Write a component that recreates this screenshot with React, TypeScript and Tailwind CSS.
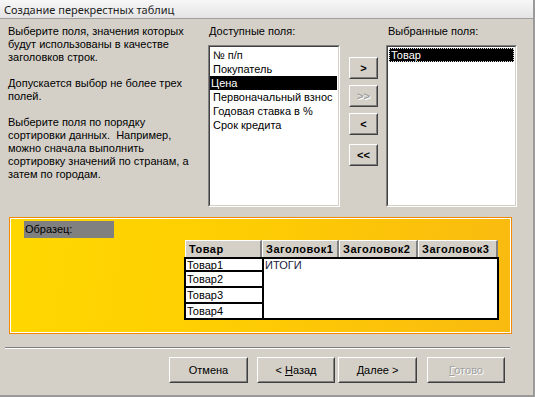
import type { ReactNode } from 'react'

const ui = "font-['Liberation_Sans',Arial,sans-serif] text-[11px] leading-[13px] text-black"

function Sunken({ className, children }: { className: string; children: ReactNode }) {
  return (
    <div className={`border border-t-[#808080] border-l-[#808080] border-r-white border-b-white ${className}`}>
      <div className="h-full border border-t-[#404040] border-l-[#404040] border-r-[#d4d0c8] border-b-[#d4d0c8] bg-white">
        {children}
      </div>
    </div>
  )
}

function Btn({ className, children }: { className: string; children: ReactNode }) {
  return (
    <div className={`border border-t-white border-l-white border-r-[#404040] border-b-[#404040] ${className}`}>
      <div className="h-full flex items-center justify-center border border-t-[#d4d0c8] border-l-[#d4d0c8] border-r-[#808080] border-b-[#808080] bg-[#d4d0c8]">
        {children}
      </div>
    </div>
  )
}

const available = ['№ п/п', 'Покупатель', 'Цена', 'Первоначальный взнос', 'Годовая ставка в %', 'Срок кредита']
const disabled = 'text-[#a0a0a0] [text-shadow:1px_1px_0_#ffffff]'

export default function App() {
  return (
    <div className={`w-[535px] h-[397px] bg-[#d4d0c8] flex flex-col border-r-2 border-b-2 border-[#9a9a9a] overflow-hidden ${ui}`}>
      {/* title */}
      <div className="h-[19px] shrink-0 border-b border-[#a0a0a0] bg-[linear-gradient(#f7f7f7,#e4e4e4)] pl-[4px] flex items-center font-['Noto_Sans',sans-serif] text-[11px] text-[#1e1e1e]">
        Создание перекрестных таблиц
      </div>

      {/* top area */}
      <div className="flex h-[191px] shrink-0">
        <div className="w-[208px] pl-[8px] pt-[6px] flex flex-col gap-[13px]">
          <p>Выберите поля, значения которых<br />будут использованы в качестве<br />заголовков строк.</p>
          <p>Допускается выбор не более трех<br />полей.</p>
          <p>Выберите поля по порядку<br />сортировки данных.&nbsp; Например,<br />можно сначала выполнить<br />сортировку значений по странам, а<br />затем по городам.</p>
        </div>

        <div className="w-[132px] pt-[6px] flex flex-col">
          <div className="pl-[1px]">Доступные поля:</div>
          <Sunken className="mt-[7px] h-[162px]">
            <div className="pt-px flex flex-col leading-[14px]">
              {available.map((f, i) => (
                <div key={f} className={i === 2 ? 'h-[14px] pl-[1px] bg-black text-white mr-px' : 'h-[14px] pl-[3px]'}>
                  {f}
                </div>
              ))}
            </div>
          </Sunken>
        </div>

        <div className="ml-[9px] w-[29px] pt-[38px] flex flex-col">
          <Btn className="h-[22px] font-bold">&gt;</Btn>
          <Btn className="h-[22px] mt-[6px] font-bold"><span className={disabled}>&gt;&gt;</span></Btn>
          <Btn className="h-[22px] mt-[6px] font-bold">&lt;</Btn>
          <Btn className="h-[22px] mt-[9px] font-bold">&lt;&lt;</Btn>
        </div>

        <div className="ml-[8px] w-[131px] pt-[6px] flex flex-col">
          <div className="pl-[2px]">Выбранные поля:</div>
          <Sunken className="mt-[7px] h-[162px]">
            <div className="pt-px px-px">
              <div className="h-[14px] leading-[12px] bg-black text-white border border-dotted border-[#e0e0e0] pl-[1px]">Товар</div>
            </div>
          </Sunken>
        </div>
      </div>

      {/* sample panel */}
      <div className="ml-[9px] mt-[7px] w-[503px] h-[117px] shrink-0 border border-[#f28a00]">
        <div className="h-full border border-white bg-[linear-gradient(100deg,#ffd800_0%,#fecd02_45%,#f9ba10_100%)] pl-[13px] pt-[2px] flex flex-col">
          <div className="w-[90px] h-[17px] bg-[#808080] pl-[1px] flex items-center">Образец:</div>
          <div className="ml-[160px] mt-[2px] w-[315px] flex flex-col">
            <div className="flex h-[17px] pl-px">
              {[['Товар', 'w-[77px]'], ['Заголовок1', 'w-[77px]'], ['Заголовок2', 'w-[79px]'], ['Заголовок3', 'w-[80px]']].map(([t, w]) => (
                <div key={t} className={`${w} h-full bg-[#d4d0c8] border-l border-t border-l-white border-t-white border-r-2 border-r-[#808080] font-bold tracking-[0.5px] pl-[3px] flex items-center`}>
                  {t}
                </div>
              ))}
            </div>
            <div className="h-[63px] border-2 border-black bg-white flex">
              <div className="w-[78px] border-r-2 border-black flex flex-col">
                <div className="h-[13px] border-b-2 border-black pl-px leading-[13px]">Товар1</div>
                <div className="h-[17px] border-b-2 border-black pl-px leading-[14px]">Товар2</div>
                <div className="h-[16px] border-b-2 border-black pl-px leading-[15px]">Товар3</div>
                <div className="flex-1 pl-px leading-[14px]">Товар4</div>
              </div>
              <div className="pl-[1px] leading-[13px] text-[#1a1a40]">ИТОГИ</div>
            </div>
          </div>
        </div>
      </div>

      {/* separator */}
      <div className="ml-[5px] mt-[13px] w-[505px] h-[2px] shrink-0 border-t border-[#808080] bg-white" />

      {/* buttons */}
      <div className="mt-[8px] ml-[169px] flex">
        <Btn className="w-[79px] h-[26px]">Отмена</Btn>
        <Btn className="ml-[9px] w-[78px] h-[26px]"><span>&lt; <u>Н</u>азад</span></Btn>
        <Btn className="ml-[3px] w-[79px] h-[26px]"><span><u>Д</u>алее &gt;</span></Btn>
        <Btn className="ml-[10px] w-[78px] h-[26px]"><span className={disabled}><u>Г</u>отово</span></Btn>
      </div>
    </div>
  )
}
